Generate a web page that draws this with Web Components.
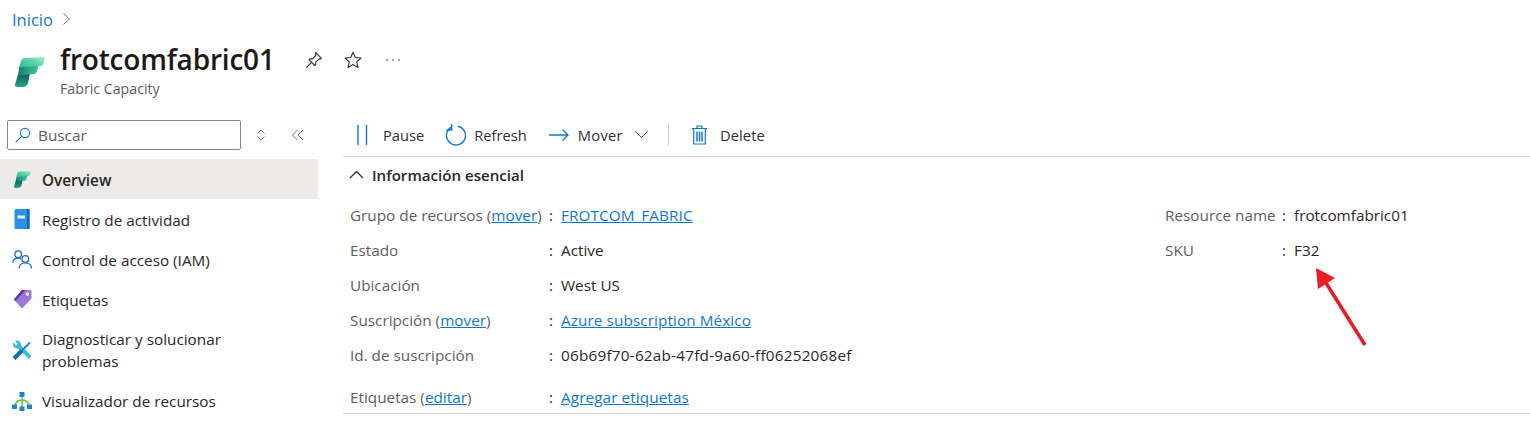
<!DOCTYPE html>
<html lang="es">
<head>
<meta charset="utf-8">
<title>frotcomfabric01</title>
<style>
  html, body { margin: 0; background: #fff; }
  body { width: 1530px; height: 426px; overflow: hidden; font-family: "Open Sans", "Noto Sans", sans-serif; color: #292827; }
</style>
</head>
<body>
<azure-app></azure-app>

<template id="fabric-tpl">
  <style>:host{display:inline-flex} svg{display:block;width:100%;height:100%}</style>
  <svg viewBox="0 0 30 30">
    <defs>
      <linearGradient id="fa" x1="0" y1="1" x2="1" y2="0"><stop offset="0" stop-color="#2db792"/><stop offset=".55" stop-color="#57d5a6"/><stop offset="1" stop-color="#b4f0c6"/></linearGradient>
      <linearGradient id="fb" x1="0" y1="0" x2="1" y2="0"><stop offset="0" stop-color="#17806f"/><stop offset="1" stop-color="#3fc596"/></linearGradient>
      <linearGradient id="fc" x1="0" y1="0" x2="0" y2="1"><stop offset="0" stop-color="#0b5d55"/><stop offset="1" stop-color="#22a58c"/></linearGradient>
    </defs>
    <path d="M3.200 17 15 16l-1.700 8.900C12.800 28 10.300 30 7 30H2.200C.6 30-.3 29 0 27.500z" fill="url(#fc)"/>
    <path d="M4.400 9.500 23.500 8l-1.200 5.500c-.4 2-2 3.300-4 3.500L3 18.500z" fill="url(#fb)"/>
    <path d="M5.700 4.500C6.100 2.500 7.500 1.200 9.800 1L30 0l-1.200 5.500c-.4 2-1.800 3.300-3.800 3.500L6 10c-1.200.1-1.800.5-2 1.500z" fill="url(#fa)"/>
  </svg>
</template>

<script>
function tpl(html) {
  const t = document.createElement("template");
  t.innerHTML = html;
  return t;
}

class FabricLogo extends HTMLElement {
  connectedCallback() {
    if (this.shadowRoot) return;
    this.attachShadow({ mode: "open" }).appendChild(document.getElementById("fabric-tpl").content.cloneNode(true));
  }
}
customElements.define("fabric-logo", FabricLogo);

// top part: breadcrumb + title
const headerTpl = tpl(`
  <style>
    :host{display:block;padding:8px 0 0 12px}
    .crumb{display:flex;align-items:center;gap:9px;height:22px;font-size:16.500px;color:#0f78d4}
    .title{display:flex;align-items:flex-start;margin-top:10px}
    fabric-logo{width:30px;height:30px;margin:17px 15px 0 3px}
    h1{margin:0;font-size:28px;line-height:38px;font-weight:600;color:#1b1a19;letter-spacing:-.2px}
    .sub{font-size:14.200px;line-height:18px;color:#605e5c;margin-top:2px}
    .acts{display:flex;align-items:center;margin:11px 0 0 30px;gap:21px}
    svg{display:block}
  </style>
  <div class="crumb">Inicio
    <svg width="9" height="14" viewBox="0 0 9 14" fill="none" stroke="#757575" stroke-width="1"><path d="M1.500 1.500 7.500 7l-6 5.500"/></svg>
  </div>
  <div class="title">
    <fabric-logo></fabric-logo>
    <div>
      <h1>frotcomfabric01</h1>
      <div class="sub">Fabric Capacity</div>
    </div>
    <div class="acts">
      <svg width="18" height="18" viewBox="0 0 18 18" fill="none" stroke="#323130" stroke-width="1.100" stroke-linejoin="round"><path d="M10.600 1.500 16.500 7.300l-1 .9-1.400-.3-3.400 3.300.1 2.300-1 1L4 8.700l1-1 2.400.2 3.300-3.400-.2-1.400zM6.400 11.600 1.500 16.500"/></svg>
      <svg width="18" height="18" viewBox="0 0 18 18" fill="none" stroke="#323130" stroke-width="1.100" stroke-linejoin="round"><path d="M9 1.200l2.300 5.300 5.700.5-4.300 3.800 1.300 5.700L9 13.600l-5 2.900 1.300-5.700L1 7l5.700-.5z"/></svg>
      <svg width="18" height="18" viewBox="0 0 18 18" fill="#323130" style="margin-left:1px"><circle cx="3" cy="9" r=".8"/><circle cx="9" cy="9" r=".8"/><circle cx="15" cy="9" r=".8"/></svg>
    </div>
  </div>
`);
class AzHeader extends HTMLElement {
  constructor() {
    super();
    this.attachShadow({ mode: "open" }).appendChild(headerTpl.content.cloneNode(true));
  }
}
customElements.define("az-header", AzHeader);

const navItemTpl = tpl(`
  <style>
    :host{display:flex;align-items:center;min-height:40px;padding-left:12px;box-sizing:border-box;font-size:15.300px;line-height:22px;color:#292827}
    :host([active]){background:#edebe9;font-weight:600}
    .ic{width:20px;height:20px;margin-right:10px;flex:none;display:flex;align-items:center;justify-content:center}
    .t{max-width:220px;padding-top:2px}
    :host([flush]) .t{padding-top:0}
  </style>
  <span class="ic"><slot name="icon"></slot></span>
  <span class="t"><slot></slot></span>
`);
class NavItem extends HTMLElement {
  constructor() {
    super();
    this.attachShadow({ mode: "open" }).appendChild(navItemTpl.content.cloneNode(true));
  }
}
customElements.define("nav-item", NavItem);

const sideTpl = tpl(`
  <style>
    :host{display:block;width:318px;flex:none}
    .top{display:flex;align-items:center;height:32px;padding:0 0 0 7px;margin-bottom:8px}
    .search{width:234px;height:30px;box-sizing:border-box;border:1px solid #8a8886;border-radius:2px;display:flex;align-items:center;padding-left:7px;gap:7px;font-size:15.300px;color:#605e5c}
    svg{display:block}
  </style>
  <div class="top">
    <div class="search">
      <svg width="16" height="16" viewBox="0 0 16 16" fill="none" stroke="#0f78d4" stroke-width="1.100"><circle cx="10" cy="6" r="4.600"/><path d="M6.600 9.400 1 15" stroke-linecap="round"/></svg>
      Buscar
    </div>
    <svg style="margin-left:14px" width="12" height="14" viewBox="0 0 12 14" fill="none" stroke="#757575"><path d="M2.500 5.500 6 2l3.500 3.500M2.500 8.500 6 12l3.500-3.500"/></svg>
    <svg style="margin-left:24px" width="14" height="14" viewBox="0 0 14 14" fill="none" stroke="#757575"><path d="M6.500 2 1.500 7l5 5M12 2 7 7l5 5"/></svg>
  </div>
  <slot></slot>
`);
class SideNav extends HTMLElement {
  constructor() {
    super();
    this.attachShadow({ mode: "open" }).appendChild(sideTpl.content.cloneNode(true));
  }
}
customElements.define("side-nav", SideNav);

const cmdTpl = tpl(`
  <style>
    :host{display:flex;align-items:center;height:39px;padding:0 0 2px 13px;border-bottom:1px solid #d6d6d6;font-size:14.700px;color:#323130;margin-top:-4px}
    .b{display:flex;align-items:center}
    .sep{width:1px;height:22px;background:#d0d0d0;margin:0 22px 0 19px}
    svg{display:block}
  </style>
  <span class="b"><svg width="12" height="22" viewBox="0 0 12 22" fill="none" stroke="#0f78d4" stroke-width="1.400"><path d="M2 1v20M10.500 1v20"/></svg><span style="margin-left:15px">Pause</span></span>
  <span class="b" style="margin-left:20px"><svg width="22" height="22" viewBox="0 0 22 22" fill="none" stroke="#0f78d4" stroke-width="1.400"><path d="M14 2.200A9.500 9.500 0 1 1 7.700 3"/><path d="M7.700 0v6H2.400"/></svg><span style="margin-left:8px">Refresh</span></span>
  <span class="b" style="margin-left:22px"><svg width="20" height="14" viewBox="0 0 20 14" fill="none" stroke="#0f78d4" stroke-width="1.300"><path d="M0 7h19M13.500 1.500 19 7l-5.500 5.500"/></svg><span style="margin-left:9px;letter-spacing:.3px">Mover</span>
    <svg style="margin-left:11px" width="15" height="9" viewBox="0 0 15 9" fill="none" stroke="#605e5c"><path d="M1 1l6.500 6.500L14 1"/></svg></span>
  <span class="sep"></span>
  <span class="b"><svg width="17" height="20" viewBox="0 0 17 20" fill="none" stroke="#0f78d4" stroke-width="1.200"><path d="M1 3.500h15M6 3V1h5v2M2.700 3.500V19h11.600V3.500"/><path d="M6 6.500v10M8.500 6.500v10M11 6.500v10" stroke-width="1.500"/></svg><span style="margin-left:12px;letter-spacing:.1px">Delete</span></span>
`);
class CmdBar extends HTMLElement {
  constructor() {
    super();
    this.attachShadow({ mode: "open" }).appendChild(cmdTpl.content.cloneNode(true));
  }
}
customElements.define("cmd-bar", CmdBar);

const propTpl = tpl(`
  <style>
    :host{display:flex;height:35px;align-items:center;font-size:15.300px;color:#292827;white-space:nowrap}
    .k{color:#605e5c;width:var(--k,199px);flex:none}
    .c{width:12px;flex:none}
    ::slotted(a){color:#0f78d4;text-decoration:underline;letter-spacing:.09px}
  </style>
  <span class="k"><slot name="k"></slot></span>
  <span class="c">:</span>
  <span><slot></slot></span>
`);
class PropRow extends HTMLElement {
  constructor() {
    super();
    this.attachShadow({ mode: "open" }).appendChild(propTpl.content.cloneNode(true));
  }
}
customElements.define("prop-row", PropRow);

const essTpl = tpl(`
  <style>
    :host{display:block;border-bottom:1px solid #d6d6d6;height:257px;box-sizing:border-box;position:relative}
    .h{display:flex;align-items:center;height:35px;padding-left:6px;font-size:15.100px;font-weight:600;color:#292827;gap:8px}
    .grid{display:flex;padding:5px 0 0 7px}
    .l{width:815px;flex:none}
    .r{--k:117px}
    svg{display:block}
    .arrow{position:absolute;left:970px;top:109px}
  </style>
  <div class="h"><svg width="15" height="9" viewBox="0 0 15 9" fill="none" stroke="#323130" stroke-width="1.300"><path d="M1 8l6.500-6.500L14 8"/></svg>Información esencial</div>
  <div class="grid">
    <div class="l"><slot name="left"></slot></div>
    <div class="r"><slot name="right"></slot></div>
  </div>
  <svg class="arrow" width="56" height="82" viewBox="0 0 56 82"><path d="M52 79 13 17" stroke="#e81c24" stroke-width="3.500" fill="none"/><path d="M3 2 22 12 5 23z" fill="#e81c24"/></svg>
`);
class EssPanel extends HTMLElement {
  constructor() {
    super();
    this.attachShadow({ mode: "open" }).appendChild(essTpl.content.cloneNode(true));
  }
}
customElements.define("ess-panel", EssPanel);

const appTpl = tpl(`
  <style>
    :host{display:block}
    .body{display:flex;margin-top:21px}
    main{flex:1;margin-left:25px;min-width:0}
    svg{display:block}
  </style>
  <az-header></az-header>
  <div class="body">
    <side-nav>
      <nav-item active><fabric-logo slot="icon" style="width:17px;height:17px"></fabric-logo>Overview</nav-item>
      <nav-item><svg slot="icon" width="16" height="20" viewBox="0 0 16 20"><rect x=".5" y="0" width="15" height="20" rx="1.500" fill="#2b8fe3"/><rect x="13" width="2.500" height="20" fill="#1268b8"/><rect x="3.500" y="6.500" width="7.500" height="3" fill="#e6f2fb"/></svg>Registro de actividad</nav-item>
      <nav-item><svg slot="icon" width="21" height="20" viewBox="0 0 21 20" fill="none" stroke="#1f6fc9" stroke-width="1.400"><circle cx="6.500" cy="5" r="3.500"/><path d="M1 14c0-3 2-5 5.500-5 1 0 2 .2 2.800.6"/><circle cx="14" cy="10" r="3.500"/><path d="M7.500 20c0-3.500 2.500-6 6.500-6s6.500 2.500 6.500 6"/></svg>Control de acceso (IAM)</nav-item>
      <nav-item><svg slot="icon" width="19" height="20" viewBox="0 0 19 20"><path d="M9 1h8a1.500 1.500 0 0 1 1.500 1.500v7L9 19.500.8 10.500z" fill="#9a78d8"/><path d="M9 1h3.500L2.500 12 .8 10.500z" fill="#5e34b8"/><circle cx="14.500" cy="5" r="1.700" fill="#fff"/></svg>Etiquetas</nav-item>
      <nav-item flush style="min-height:62px"><svg slot="icon" width="20" height="20" viewBox="0 0 20 20"><path d="M1 2.500 4 5.500 6 3.500 3 1C6-.5 9.500 1.500 9 5.500L19.500 16 17 19 6.500 8.500C3 9.500 0 6.500 1 2.500z" fill="#32bedd"/><path d="M2 18.500 10 10.500" stroke="#0f6cb0" stroke-width="4"/><path d="M10 10.500 18 2.500" stroke="#1a86cf" stroke-width="2"/></svg><span>Diagnosticar y solucionar problemas</span></nav-item>
      <nav-item flush><svg slot="icon" width="20" height="19" viewBox="0 0 20 19" fill="none"><path d="M10 5v10M3 13c1-3 4-5 7-5s6 2 7 5" stroke="#5cc04c" stroke-width="1.400"/><rect x="7.500" y="0" width="5" height="5" fill="#1a83d6"/><rect x="0" y="12.500" width="5" height="4.500" fill="#1a83d6"/><rect x="15" y="12.500" width="5" height="4.500" fill="#1a83d6"/><rect x="7.500" y="14.500" width="5" height="4.500" fill="#1a83d6"/></svg>Visualizador de recursos</nav-item>
    </side-nav>
    <main>
      <cmd-bar></cmd-bar>
      <ess-panel>
        <prop-row slot="left"><span slot="k">Grupo de recursos (<a style="color:#0f78d4;text-decoration:underline">mover</a>)</span><a>FROTCOM_FABRIC</a></prop-row>
        <prop-row slot="left"><span slot="k">Estado</span>Active</prop-row>
        <prop-row slot="left"><span slot="k">Ubicación</span>West US</prop-row>
        <prop-row slot="left"><span slot="k">Suscripción (<a style="color:#0f78d4;text-decoration:underline">mover</a>)</span><a>Azure subscription México</a></prop-row>
        <prop-row slot="left"><span slot="k">Id. de suscripción</span><span style="letter-spacing:.22px">06b69f70-62ab-47fd-9a60-ff06252068ef</span></prop-row>
        <prop-row slot="left" style="margin-top:7px"><span slot="k">Etiquetas (<a style="color:#0f78d4;text-decoration:underline">editar</a>)</span><a>Agregar etiquetas</a></prop-row>
        <prop-row slot="right"><span slot="k">Resource name</span>frotcomfabric01</prop-row>
        <prop-row slot="right"><span slot="k">SKU</span>F32</prop-row>
      </ess-panel>
    </main>
  </div>
`);
class AzureApp extends HTMLElement {
  constructor() {
    super();
    this.attachShadow({ mode: "open" }).appendChild(appTpl.content.cloneNode(true));
  }
}
customElements.define("azure-app", AzureApp);
</script>
</body>
</html>
